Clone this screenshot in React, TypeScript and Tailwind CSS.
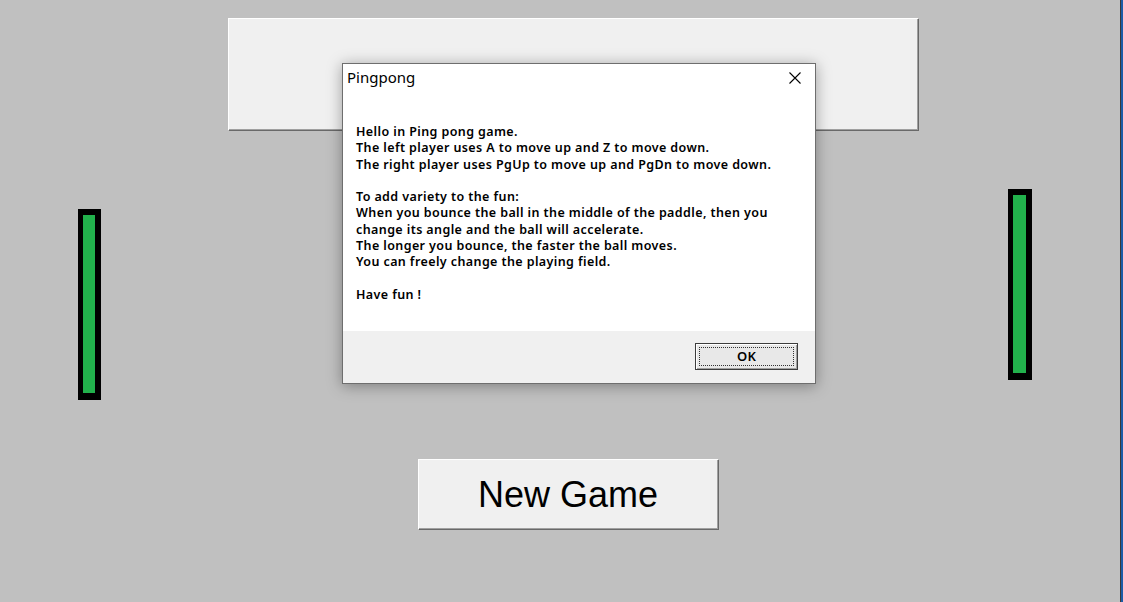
import React from "react";

const lines1 = [
  "Hello in Ping pong game.",
  "The left player uses A to move up and Z to move down.",
  "The right player uses PgUp to move up and PgDn to move down.",
];
const lines2 = [
  "To add variety to the fun:",
  "When you bounce the ball in the middle of the paddle, then you",
  "change its angle and the ball will accelerate.",
  "The longer you bounce, the faster the ball moves.",
  "You can freely change the playing field.",
];

function Paddle({ className }: { className: string }) {
  return (
    <div
      className={
        "absolute w-[23px] h-[191px] bg-[#22b14c] border-black border-l-[5px] border-r-[6px] border-t-[6px] border-b-[7px] " +
        className
      }
    />
  );
}

export default function App() {
  return (
    <div className="w-[1123px] h-[602px] flex bg-[#c0c0c0] overflow-hidden">
      <div className="relative flex-1 flex flex-col items-start">
        {/* score / title bar */}
        <div className="mt-[18px] ml-[228px] w-[690px] h-[112px] bg-[#f0f0f0] shadow-[inset_1px_1px_0_#ffffff,inset_-1px_-1px_0_#a0a0a0,1px_1px_0_#696969]" />

        {/* New game button */}
        <button className="mt-[329px] ml-[418px] w-[300px] h-[70px] bg-[#f0f0f0] shadow-[inset_1px_1px_0_#ffffff,inset_-1px_-1px_0_#a0a0a0,1px_1px_0_#696969] flex items-center justify-center font-['Liberation_Sans',Arial,sans-serif] text-[36px] text-black leading-none pt-[2px]">
          New Game
        </button>

        <Paddle className="left-[78px] top-[209px]" />
        <Paddle className="left-[1008px] top-[189px] w-[24px]" />

        {/* message dialog */}
        <div className="absolute left-[342px] top-[63px] w-[474px] h-[321px] flex flex-col bg-white border border-[#6e6e6e] shadow-[0_2px_14px_rgba(0,0,0,0.35)]">
          <div className="h-[31px] flex items-center justify-between pl-[4px] pr-[14px] font-['Noto_Sans','Open_Sans',sans-serif] text-[15px] text-black">
            <span className="mt-[-4px]">Pingpong</span>
            <svg width="12" height="12" viewBox="0 0 12 12" className="mt-[-3px]">
              <path d="M0.5 0.5 L11.5 11.5 M11.5 0.5 L0.5 11.5" stroke="#000" strokeWidth="1.1" fill="none" />
            </svg>
          </div>
          <div className="flex-1 pl-[13px] pt-[29px] font-['Noto_Sans','Open_Sans',sans-serif] font-semibold text-[12.5px] tracking-[0.4px] leading-[16.25px] text-black">
            {lines1.map((l) => (
              <div key={l}>{l}</div>
            ))}
            <div className="h-[16.25px]" />
            {lines2.map((l) => (
              <div key={l}>{l}</div>
            ))}
            <div className="h-[16.25px]" />
            <div>Have fun !</div>
          </div>
          <div className="h-[52px] bg-[#f0f0f0] flex items-start justify-end pr-[17px] pt-[12px]">
            <button className="w-[103px] h-[27px] bg-[#e8e8e8] border border-[#3c3c3c] shadow-[inset_1px_1px_0_#ffffff,inset_-1px_-1px_0_#a0a0a0] p-[3px]">
              <div className="w-full h-full border border-dotted border-[#333] flex items-center justify-center font-['Noto_Sans','Open_Sans',sans-serif] font-semibold text-[13px] tracking-[0.3px] text-black leading-none">
                OK
              </div>
            </button>
          </div>
        </div>
      </div>
      <div className="w-px h-full bg-[#3a3a3a]" />
      <div className="w-[2px] h-full bg-[#1c5ca6]" />
    </div>
  );
}
